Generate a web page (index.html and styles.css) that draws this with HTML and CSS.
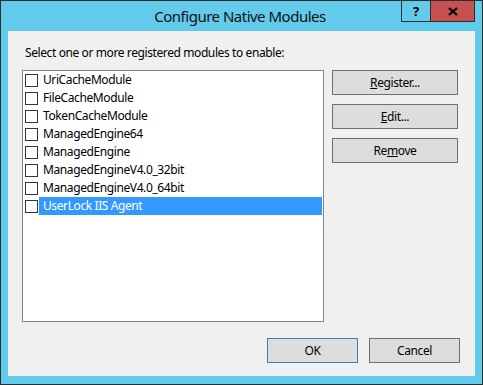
FILE: index.html
```html
<!DOCTYPE html>
<html lang="en">
<head>
    <meta charset="UTF-8">
    <title>Configure Native Modules</title>
    <link rel="stylesheet" href="styles.css">
</head>
<body>

    <div class="window">
        <div class="titlebar">
            <div></div>
            <div class="title">Configure Native Modules</div>
            <div class="caption">
                <span class="cap help">?</span>
                <span class="cap close">
                    <svg width="10" height="9" viewBox="0 0 10 9"><path d="M1 1L9 8M9 1L1 8" stroke="#000" stroke-width="2.2"/></svg>
                </span>
            </div>
        </div>

        <div class="client">
            <p class="label">Select one or more registered modules to enable:</p>

            <div class="main">
                <ul class="listbox">
                    <li><i class="check"></i><span>UriCacheModule</span></li>
                    <li><i class="check"></i><span>FileCacheModule</span></li>
                    <li><i class="check"></i><span>TokenCacheModule</span></li>
                    <li><i class="check"></i><span>ManagedEngine64</span></li>
                    <li><i class="check"></i><span>ManagedEngine</span></li>
                    <li><i class="check"></i><span>ManagedEngineV4.0_32bit</span></li>
                    <li><i class="check"></i><span>ManagedEngineV4.0_64bit</span></li>
                    <li class="selected"><i class="check"></i><span>UserLock IIS Agent</span></li>
                </ul>

                <div class="side">
                    <a href="javascript:void(0)" class="btn"><u>R</u>egister...</a>
                    <a href="javascript:void(0)" class="btn"><u>E</u>dit...</a>
                    <a href="javascript:void(0)" class="btn">Re<u>m</u>ove</a>
                </div>
            </div>

            <div class="footer">
                <a href="javascript:void(0)" class="btn default">OK</a>
                <a href="javascript:void(0)" class="btn">Cancel</a>
            </div>
        </div>
    </div>

</body>
</html>
```

FILE: styles.css
```css
*{margin: 0;padding: 0;box-sizing: border-box;}
a{text-decoration: none;color: #000;}
ul,li{list-style: none;}
body{font-size: 12px;font-family: "Noto Sans", "Liberation Sans", sans-serif;letter-spacing: -0.4px;color: #000;}

.window{width: 483px; height: 385px; border: 1px solid #2d2d2d; background: #62caea; display: flex; flex-direction: column;}

.titlebar{height: 30px; display: grid; grid-template-columns: 1fr auto 1fr; align-items: start;}
.title{font-size: 15px; line-height: 30px; color: #111; letter-spacing: -0.5px; padding-right: 3px;}
.caption{justify-self: end; display: flex; margin-right: 7px; margin-top: -1px;}
.cap{height: 22px; border: 1px solid #2d2d2d; display: flex; align-items: center; justify-content: center; font-weight: bold; font-size: 13px;}
.help{width: 29px; border-right: none;}
.close{width: 45px; background: #c75050;}

.client{flex: 1; margin: 0 7px 8px 7px; background: #f0f0f0; padding: 14px 17px 13px 14px; display: flex; flex-direction: column;}
.label{padding-left: 3px; line-height: 15px; height: 25px;}

.main{display: flex; gap: 8px;}
.listbox{width: 302px; height: 252px; border: 1px solid #838383; background: #fff;}
.listbox li{height: 18px; display: flex; align-items: center;}
.check{width: 13px; height: 13px; border: 1px solid #333; background: #fff; margin: 0 1px 0 2px;}
.listbox li span{flex: 1; height: 18px; line-height: 18px; padding-left: 4px; margin-right: 1px;}
.listbox li.selected span{background: #3399ff; color: #fff;}

.side{width: 126px; display: flex; flex-direction: column; gap: 9px;}
.btn{display: block; height: 25px; line-height: 23px; border: 1px solid #707070; background: #dddddd; text-align: center;}
.btn u{text-decoration: underline;}

.footer{display: flex; justify-content: flex-end; gap: 11px; margin-top: 16px; margin-right: -2px;}
.footer .btn{width: 91px;}
.btn.default{border-color: #3c7fb1;}
```
